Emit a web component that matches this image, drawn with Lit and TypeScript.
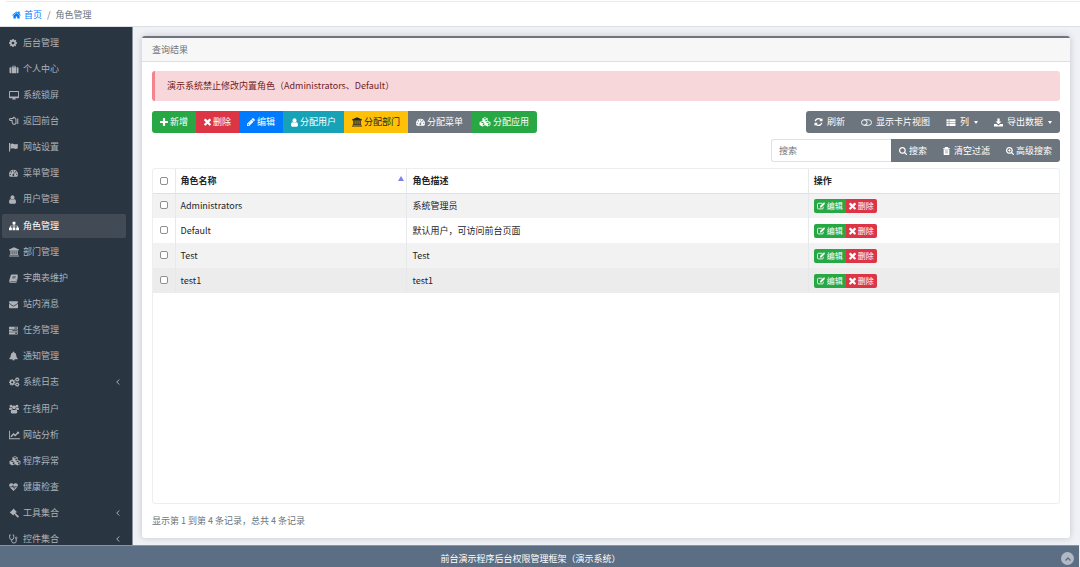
import { LitElement, html, css, svg, type TemplateResult } from "lit";
import { customElement, property } from "lit/decorators.js";
import { classMap } from "lit/directives/class-map.js";

const small = "0 0 16 16";

const gearPath =
  "M1152 896q0-106-75-181t-181-75-181 75-75 181 75 181 181 75 181-75 75-181zm512-109v222q0 12-8 23t-20 13l-185 28q-19 54-39 91 35 50 107 138 10 12 10 25t-9 23q-27 37-99 108t-94 71q-12 0-26-9l-138-108q-44 23-91 38-16 136-29 186-7 28-36 28h-222q-14 0-24.5-8.5t-11.5-21.5l-28-184q-49-16-90-37l-141 107q-10 9-25 9-14 0-25-11-126-114-165-168-7-10-7-23 0-12 8-23 15-21 51-66.5t54-70.5q-27-50-41-99l-183-27q-13-2-21-12.5t-8-23.5v-222q0-12 8-23t19-13l186-28q14-46 39-92-40-57-107-138-10-12-10-24 0-10 9-23 26-36 98.5-107.5t94.5-71.5q13 0 26 10l138 107q44-23 91-38 16-136 29-186 7-28 36-28h222q14 0 24.5 8.5t11.5 21.5l28 184q49 16 90 37l142-107q9-9 24-9 13 0 25 10 129 119 165 170 7 8 7 22 0 12-8 23-15 21-51 66.5t-54 70.5q26 50 41 98l183 28q13 2 21 12.5t8 23.5z";

// Each entry: view box, drawn width, drawn height, shape.
const icons: Record<string, [string, number, number, TemplateResult]> = {
  home: ["64 0 1664 1792", 9, 10, svg`<path d="M1472 992v480q0 26-19 45t-45 19h-384v-384h-256v384h-384q-26 0-45-19t-19-45v-480q0-1 .5-3t.5-3l575-474 575 474q1 2 1 6zm223-69l-62 74q-8 9-21 11h-3q-13 0-21-7l-692-577-692 577q-12 8-24 7-13-2-21-11l-62-74q-8-10-7-23.5t11-21.5l719-599q32-26 76-26t76 26l244 204v-195q0-14 9-23t23-9h192q14 0 23 9t9 23v408l219 182q10 8 11 21.5t-7 23.5z"/>`],
  gear: ["128 0 1536 1792", 8, 10, svg`<path d=${gearPath} />`],
  suitcase: [small, 10, 9, svg`<path fill-rule="evenodd" d="M5 4V2.6Q5 1.5 6.100 1.500H9.900Q11 1.500 11 2.600V4h1v10.500H4V4zM6.300 4h3.400V2.800H6.300zM3 4v10.500H1.600Q0 14.500 0 13V5.500Q0 4 1.600 4zM13 4h1.400Q16 4 16 5.500V13q0 1.500-1.600 1.500H13z"/>`],
  desktop: [small, 10, 10, svg`<path fill-rule="evenodd" d="M1.400 1.500h13.200Q16 1.500 16 2.900v8.700q0 1.400-1.400 1.400H10l.5 1.200q.7.300.7.800H4.800q0-.5.700-.8L6 13H1.400Q0 13 0 11.600V2.900Q0 1.500 1.400 1.500zM1.500 3v7.400h13V3z"/>`],
  hand: [small, 10, 10, svg`<path fill="none" stroke="currentColor" stroke-width="1.700" stroke-linejoin="round" d="M11 4.500 8.300 2.200Q6.300 1.600 6.700 4H2Q.6 4.300.7 5.600.9 7 2.200 7H5q-.9 1 .2 2-.6 1.200.6 2-.2 1.500 1.200 2.200h2.200l2-1.300zM14 3.800v8.800"/>`],
  flag: ["1 0 16 16", 10, 10, svg`<path d="M1 1.500h1.800V15H1zM3.400 3.200Q6 1.700 8.500 3q3 1.500 6.500-.4V10q-3 1.800-6 .5-2.700-1.300-5.600.3z"/>`],
  gauge: [small, 9, 10, svg`<path fill-rule="evenodd" d="M8 2a8 8 0 0 1 8 8q0 2.400-1.200 4.300-.2.200-.5.200H1.700q-.3 0-.5-.2Q0 12.400 0 10a8 8 0 0 1 8-8zM2.300 9.200a1.100 1.100 0 1 0 .1 0zM4 5a1.100 1.100 0 1 0 .1 0zM8 3.400a1.100 1.100 0 1 0 .1 0zM12 5a1.100 1.100 0 1 0 .1 0zM13.700 9.200a1.100 1.100 0 1 0 .1 0zM9 6.200 7.700 10a1.700 1.700 0 1 0 1.200.4L10 6.600z"/>`],
  user: ["256 64 1280 1664", 7, 9, svg`<path d="M1536 1399q0 109-62.500 187t-150.500 78h-854q-88 0-150.500-78t-62.500-187q0-85 8.500-160.500t31.500-152 58.500-131 94-89 134.500-34.500q131 128 313 128t313-128q76 0 134.500 34.500t94 89 58.500 131 31.500 152 8.500 160.500zm-256-887q0 159-112.500 271.500t-271.500 112.500-271.500-112.500-112.500-271.500 112.500-271.500 271.500-112.500 271.500 112.500 112.500 271.500z"/>`],
  sitemap: ["0 0 1792 1792", 10, 10, svg`<path d="M1792 1248v320q0 40-28 68t-68 28h-320q-40 0-68-28t-28-68v-320q0-40 28-68t68-28h96v-192h-512v192h96q40 0 68 28t28 68v320q0 40-28 68t-68 28h-320q-40 0-68-28t-28-68v-320q0-40 28-68t68-28h96v-192h-512v192h96q40 0 68 28t28 68v320q0 40-28 68t-68 28h-320q-40 0-68-28t-28-68v-320q0-40 28-68t68-28h96v-192q0-52 38-90t90-38h512v-192h-96q-40 0-68-28t-28-68v-320q0-40 28-68t68-28h320q40 0 68 28t28 68v320q0 40-28 68t-68 28h-96v192h512q52 0 90 38t38 90v192h96q40 0 68 28t28 68z"/>`],
  bank: [small, 10, 10, svg`<path d="M8 .5 16 4v1.200h-1.100q0 .6-.6.600H1.700q-.6 0-.6-.6H0V4zM2.100 6.500h2.200V12h1.200V6.500h2V12h1.200V6.500h2V12h1.200V6.500H14V12h.4q.6 0 .6.800H1q0-.8.600-.8h.5zM.6 13.400h14.800q.6 0 .6.700v1.200H0v-1.200q0-.7.600-.7z"/>`],
  book: [small, 9, 9, svg`<path fill-rule="evenodd" d="M5.300 1h9q1.900.3 1.400 2l-2.700 9.300Q12.600 13.500 11.400 13.500H3.200q-1 0-1 .4.100.5 1 .5h8.900q.6 0 .8-.6L15.600 5q.6.500.3 1.500l-2.500 8.200q-.4 1-1.500 1H3Q.7 15.600.3 13.300q-.2-1 .2-1.800L3 2.800Q3.600 1 5.300 1zM6.400 4l-.3 1h6l.3-1zM5.700 6.400l-.3 1h6l.3-1z"/>`],
  envelope: ["0 0 1792 1792", 9, 9, svg`<path d="M1792 710v794q0 66-47 113t-113 47h-1472q-66 0-113-47t-47-113v-794q44 49 101 87 362 246 497 345 57 42 92.500 65.500t94.500 48 110 24.500h2q51 0 110-24.500t94.500-48 92.500-65.500q170-123 498-345 57-39 100-87zm0-294q0 79-49 151t-122 123q-376 261-468 325-10 7-42.500 30.500t-54 38-52 32.500-57.500 27-50 9h-2q-23 0-50-9t-57.500-27-52-32.500-54-38-42.500-30.500q-91-64-262-182.500t-205-142.500q-62-42-117-115.500t-55-136.500q0-78 41.500-130t118.500-52h1472q65 0 112.500 47t47.500 113z"/>`],
  tasks: [small, 9, 9, svg`<path fill-rule="evenodd" d="M.6 1.500h14.800q.6 0 .6.600v2.800q0 .6-.6.600H.6Q0 5.500 0 4.900V2.100q0-.6.600-.6zM9.500 2.700v1.600h5.300V2.700zM.6 6.300h14.800q.6 0 .6.600v2.700q0 .6-.6.600H.6q-.6 0-.6-.6V6.900q0-.6.600-.6zM6 7.400V9h8.800V7.400zM.6 11h14.800q.6 0 .6.600v2.800q0 .6-.6.600H.6q-.6 0-.6-.6v-2.800q0-.6.600-.6zM11 12.200v1.600h3.800v-1.600z"/>`],
  bell: [small, 9, 10, svg`<path d="M8 .2q1 0 1 1v.5q3.500.7 3.800 4.300 0 5 2.700 6.500 0 1-1 1.100H10Q9.800 15.700 8 15.800 6.200 15.700 6 13.600H1.500q-1-.1-1-1.100Q3.200 11 3.200 6 3.500 2.400 7 1.700v-.5q0-1 1-1z"/>`],
  gears: [small, 10, 10, svg`<g transform="translate(-.8 2.600) scale(.0066)"><path d=${gearPath} /></g><g transform="translate(9 -.2) scale(.0046)"><path d=${gearPath} /></g><g transform="translate(9 8) scale(.0046)"><path d=${gearPath} /></g>`],
  users: [small, 10, 10, svg`<path d="M3.200 1a2.200 2.200 0 1 1-.1 0zM12.800 1a2.200 2.200 0 1 1-.1 0zM8 2.200a3 3 0 1 1-.1 0zM1.600 5.500q1.800 1 2.900.2Q4.500 7.300 5.500 8.200 3.800 8.300 3 9.500H1.600Q0 9.500 0 8q0-2.300 1.600-2.500zM14.400 5.500Q16 5.700 16 8q0 1.500-1.600 1.500H13q-.8-1.200-2.500-1.300 1-.9 1-2.500 1.100.8 2.900-.2zM5.200 8.700q2.800 2 5.600 0 2.500.2 2.500 4Q13.300 15 11.300 15H4.700q-2 0-2-2.300 0-3.800 2.500-4z"/>`],
  chart: ["0 0 18 16", 11, 10, svg`<path d="M0 1h1.500v12.500H18V15H0zM16.500 2.500v4.300l-1.400-1.300-5 5.100-2.600-2.400-3.400 3.500L2.200 9.900 7.500 4.700l2.500 2.500 3.400-3.400-1.300-1.300z"/>`],
  cubes: ["0 0 18 16", 12, 10, svg`<path fill-rule="evenodd" d="m9 .3 4.200 1.700v4.300l4.500 1.800v4.700L13.300 15.200 9 13.100 4.700 15.200.3 12.800V8.100l4.500-1.800V2zM6.200 2.700 9 3.800l2.800-1.100L9 1.700zM9.700 5v2.300l2.500-1V4zM2 8.500l2.800 1.200 2.800-1.200-2.800-1.100zM10.400 8.500l2.800 1.200 2.800-1.200-2.800-1.100zM5.500 10.800v2.700L8 12.200V9.700zM13.900 10.800v2.700l2.500-1.300V9.700z"/>`],
  heart: [small, 9, 10, svg`<path d="M.4 7.200Q-.5 1.500 4.300 1.500 6.700 1.600 8 3.500q1.300-1.900 3.700-2 4.800 0 3.900 5.700h-4l-.9-1.800-1.300 3.800L7 4 5.300 7.200zM1.200 8.500h4.900l.7-1.300 2.400 5 1.700-4 .1.300h3.800L8 15z"/>`],
  gavel: [small, 10, 10, svg`<path d="m6.600.8.8.3 4.800 4.800q.4.700-.2 1.300l-1-.2-1 1 5.400 4.700q.6.700 0 1.500l-.9.800q-.8.500-1.400-.1L8.400 9.700l-1 .9.200 1q-.6.600-1.200.2L1.500 7q-.4-.6.200-1.200l1 .1L6.500 2Z"/>`],
  stethoscope: ["1 0 16 16", 10, 10, svg`<path fill="none" stroke="currentColor" stroke-width="1.500" d="M3.800 1.500H2v4.300q.2 3 3.300 3.200 3.100-.2 3.300-3.200V1.500H6.900M5.300 9v2.500q.2 3 3.500 3 3.600 0 3.700-3V8"/><circle cx="12.500" cy="6.300" r="1.400" fill="none" stroke="currentColor" stroke-width="1.300"/>`],
  plus: ["192 128 1408 1408", 8, 8, svg`<path d="M1600 736v192q0 40-28 68t-68 28h-416v416q0 40-28 68t-68 28h-192q-40 0-68-28t-28-68v-416h-416q-40 0-68-28t-28-68v-192q0-40 28-68t68-28h416v-416q0-40 28-68t68-28h192q40 0 68 28t28 68v416h416q40 0 68 28t28 68z"/>`],
  times: ["302 270 1188 1320", 7, 8, svg`<path d="M1490 1322q0 40-28 68l-136 136q-28 28-68 28t-68-28l-294-294-294 294q-28 28-68 28t-68-28l-136-136q-28-28-28-68t28-68l294-294-294-294q-28-28-28-68t28-68l136-136q28-28 68-28t68 28l294 294 294-294q28-28 68-28t68 28l136 136q28 28 28 68t-28 68l-294 294 294 294q28 28 28 68z"/>`],
  pencil: ["128 128 1536 1536", 8, 8, svg`<path d="M491 1536l91-91-235-235-91 91v107h128v128h107zm523-928q0-22-22-22-10 0-17 7l-542 542q-7 7-7 17 0 22 22 22 10 0 17-7l542-542q7-7 7-17zm-54-192l416 416-832 832h-416v-416zm683 96q0 53-37 90l-166 166-416-416 166-165q36-38 90-38 53 0 91 38l235 234q37 39 37 91z"/>`],
  edit: [small, 8, 8, svg`<path fill="none" stroke="currentColor" stroke-width="1.700" d="M10.500 2.500H3Q1 2.500 1 4.500v7.300q0 2 2 2h7.500q2 0 2-2V9.500"/><path d="m12.600 1.600 2.700 2.700-6.600 6.600H6V8.200zM13.300.9q.7-.6 1.400 0l1.200 1.300q.5.700 0 1.300l-.3.300L13 1.200z"/>`],
  refresh: ["128 128 1536 1536", 9, 8, svg`<path d="M1639 1056q0 5-1 7-64 268-268 434.500t-478 166.500q-146 0-282.500-55t-243.500-157l-129 129q-19 19-45 19t-45-19-19-45v-448q0-26 19-45t45-19h448q26 0 45 19t19 45-19 45l-137 137q71 66 161 102t187 36q134 0 250-65t186-179q11-17 53-117 8-23 30-23h192q13 0 22.500 9.500t9.500 22.500zm25-800v448q0 26-19 45t-45 19h-448q-26 0-45-19t-19-45 19-45l138-138q-148-137-349-137-134 0-250 65t-186 179q-11 17-53 117-8 23-30 23h-199q-13 0-22.500-9.500t-9.500-22.500v-7q65-268 270-434.500t480-166.500q146 0 284 55.500t245 156.500l130-129q19-19 45-19t45 19 19 45z"/>`],
  toggle: ["0 0 20 16", 11, 9, svg`<path fill="none" stroke="currentColor" stroke-width="1.700" d="M6 3h8a5 5 0 0 1 0 10H6"/><circle cx="6" cy="8" r="5" fill="none" stroke="currentColor" stroke-width="1.700"/>`],
  list: [small, 10, 9, svg`<path d="M0 2h4v3.400H0zM5 2h11v3.400H5zM0 6.400h4v3.400H0zM5 6.400h11v3.400H5zM0 10.800h4v3.400H0zM5 10.800h11v3.400H5z"/>`],
  download: [small, 9, 9, svg`<path d="M6 1h4v5h3.300L8 11 2.700 6H6zM0 10.500h4.700L8 13.300l3.300-2.800H16V15H0z"/>`],
  search: ["64 128 1664 1664", 8, 8, svg`<path d="M1216 832q0-185-131.500-316.500t-316.500-131.500-316.500 131.500-131.500 316.500 131.500 316.500 316.500 131.500 316.500-131.500 131.500-316.500zm512 832q0 52-38 90t-90 38q-54 0-90-38l-343-342q-179 124-399 124-143 0-273.500-55.500t-225-150-150-225-55.500-273.500 55.500-273.500 150-225 225-150 273.500-55.500 273.500 55.500 225 150 150 225 55.500 273.500q0 220-124 399l343 343q37 37 37 90z"/>`],
  zoomIn: ["64 128 1664 1664", 8, 8, svg`<path d="M1216 832q0-185-131.500-316.500t-316.500-131.500-316.500 131.500-131.500 316.500 131.500 316.500 316.500 131.500 316.500-131.500 131.500-316.500zm512 832q0 52-38 90t-90 38q-54 0-90-38l-343-342q-179 124-399 124-143 0-273.500-55.500t-225-150-150-225-55.500-273.500 55.500-273.500 150-225 225-150 273.500-55.500 273.500 55.500 225 150 150 225 55.500 273.500q0 220-124 399l343 343q37 37 37 90zM690 530h156v224h224v156H846v224H690V910H466V754h224z"/>`],
  trash: ["2 1 12 14", 7, 8, svg`<path fill-rule="evenodd" d="M6 1h4q.8 0 1 .8l.4 1.200H14v1.400H2V3h2.600L5 1.800Q5.200 1 6 1zM3 5h10v8.500q-.2 1.500-1.500 1.500h-7Q3.200 15 3 13.500zM5.500 6.700v5.600h.6V6.700zM7.700 6.700v5.600h.6V6.700zM9.900 6.700v5.600h.6V6.700z"/>`],
  angleLeft: ["4 2 8 12", 4, 6, svg`<path fill="none" stroke="currentColor" stroke-width="2" d="M10.500 3 5.500 8l5 5"/>`],
  angleUp: [small, 8, 8, svg`<path fill="none" stroke="currentColor" stroke-width="2.600" d="m3 11 5-5 5 5"/>`],
};

@customElement("fa-icon")
class FaIcon extends LitElement {
  @property() name = "home";
  static styles = css`
    :host { display: inline-flex; flex: none; }
    svg { fill: currentColor; overflow: visible; }
  `;
  render() {
    const [box, w, h, shape] = icons[this.name];
    return html`<svg viewBox=${box} width=${w} height=${h} aria-hidden="true">${shape}</svg>`;
  }
}

interface MenuItem { icon: string; text: string; active?: boolean; children?: boolean; }

const menu: MenuItem[][] = [
  [
    { icon: "gear", text: "后台管理" },
    { icon: "suitcase", text: "个人中心" },
    { icon: "desktop", text: "系统锁屏" },
    { icon: "hand", text: "返回前台" },
    { icon: "flag", text: "网站设置" },
    { icon: "gauge", text: "菜单管理" },
    { icon: "user", text: "用户管理" },
  ],
  [
    { icon: "sitemap", text: "角色管理", active: true },
    { icon: "bank", text: "部门管理" },
    { icon: "book", text: "字典表维护" },
    { icon: "envelope", text: "站内消息" },
    { icon: "tasks", text: "任务管理" },
    { icon: "bell", text: "通知管理" },
    { icon: "gears", text: "系统日志", children: true },
  ],
  [
    { icon: "users", text: "在线用户" },
    { icon: "chart", text: "网站分析" },
    { icon: "cubes", text: "程序异常" },
    { icon: "heart", text: "健康检查" },
    { icon: "gavel", text: "工具集合", children: true },
    { icon: "stethoscope", text: "控件集合", children: true },
  ],
];

const actions = [
  { icon: "plus", text: "新增", tone: "success" },
  { icon: "times", text: "删除", tone: "danger" },
  { icon: "pencil", text: "编辑", tone: "primary" },
  { icon: "user", text: "分配用户", tone: "info" },
  { icon: "bank", text: "分配部门", tone: "warning" },
  { icon: "gauge", text: "分配菜单", tone: "secondary" },
  { icon: "cubes", text: "分配应用", tone: "success" },
];

const roles = [
  { name: "Administrators", desc: "系统管理员" },
  { name: "Default", desc: "默认用户，可访问前台页面" },
  { name: "Test", desc: "Test" },
  { name: "test1", desc: "test1", hover: true },
];

@customElement("app-root")
class AppRoot extends LitElement {
  static styles = css`
    :host {
      display: flex;
      flex-direction: column;
      height: 100vh;
      overflow: hidden;
      font: 9px/14px "Noto Sans CJK SC", "Noto Sans", sans-serif;
      color: #212529;
      background: #eff1f7;
    }
    * { box-sizing: border-box; }
    a { color: inherit; text-decoration: none; }
    button, input { font: inherit; color: inherit; margin: 0; }
    .crumbs {
      flex: none;
      height: 27px;
      padding-left: 6px;
      background: #fff;
      border-bottom: 1px solid #dcdfe3;
    }
    .crumbs ol {
      display: flex;
      align-items: center;
      height: 26px;
      margin: 0;
      padding: 2px 6px 0;
      list-style: none;
      border-top: 1px solid #fff;
      box-shadow: inset 0 1px #e9ecef;
      color: #6c757d;
    }
    .crumbs a { display: flex; align-items: center; gap: 3px; color: #007bff; }
    .slash { padding: 0 5px; }
    .body { flex: 1; min-height: 0; display: flex; }
    .side {
      flex: none;
      width: 133px;
      padding: 4px 6px 0 2px;
      overflow: hidden;
      background: #2a3542;
      border-right: 1px solid #8d949c;
      color: #aeb2b7;
    }
    .groups { display: flex; flex-direction: column; gap: 3px; }
    .groups ul { display: grid; gap: 2px; margin: 0; padding: 0; list-style: none; }
    .link {
      display: flex;
      align-items: center;
      gap: 4px;
      height: 24px;
      padding: 0 6px 0 7px;
      border-radius: 2px;
    }
    .link.active { background: #414a55; color: #fff; }
    .slot { display: flex; flex: none; width: 10px; }
    .arrow { margin-left: auto; }
    main { flex: 1; min-width: 0; display: flex; padding: 9px 10px 7px 9px; }
    .card {
      flex: 1;
      min-width: 0;
      display: flex;
      flex-direction: column;
      background: #fff;
      border-top: 2px solid #6c757d;
      border-radius: 3px;
      box-shadow: 0 0 7px rgba(0, 0, 0, 0.18);
    }
    .card h1 {
      margin: 0;
      padding: 5px 10px 4px;
      font-size: 9px;
      font-weight: 400;
      color: #6c757d;
      background: #f7f7f7;
      border-bottom: 1px solid #dfdfdf;
    }
    .content {
      flex: 1;
      min-height: 0;
      display: flex;
      flex-direction: column;
      padding: 9px 10px 10px;
    }
    .alert {
      padding: 8px 12px;
      color: #721c24;
      background: #f8d7da;
      border-left: 3px solid #f5828f;
      border-radius: 3px;
    }
    .tools { display: flex; justify-content: space-between; margin-top: 10px; }
    .btns { display: flex; border-radius: 3px; overflow: hidden; }
    .btn {
      display: flex;
      align-items: center;
      gap: 2px;
      height: 22px;
      padding: 0 8px;
      border: 0;
      color: #fff;
      white-space: nowrap;
      background: #6c757d;
    }
    .btn.wide { gap: 4px; }
    .success { background: #28a745; }
    .danger { background: #dc3545; }
    .primary { background: #007bff; }
    .info { background: #17a2b8; }
    .warning { background: #ffc107; color: #212529; }
    .secondary { background: #6c757d; }
    .caret {
      margin-left: 1px;
      border: 2px solid transparent;
      border-top: 3px solid currentColor;
      border-bottom: 0;
    }
    .search { display: flex; justify-content: flex-end; margin-top: 6px; }
    .search input {
      width: 120px;
      height: 23px;
      padding: 0 7px;
      border: 1px solid #dee2e6;
      border-right: 0;
      border-radius: 3px 0 0 3px;
      outline: 0;
    }
    .search input::placeholder { color: #6c757d; opacity: 1; }
    .search .btns { border-radius: 0 3px 3px 0; }
    .search .btn { height: 23px; }
    .grid {
      flex: 1;
      min-height: 0;
      margin-top: 6px;
      border: 1px solid #eceef0;
      border-radius: 3px;
      overflow: hidden;
    }
    table { width: 100%; table-layout: fixed; border-collapse: collapse; }
    .col-check { width: 22px; }
    .col-name { width: 25.6%; }
    .col-desc { width: 44.3%; }
    th, td { height: 25px; padding: 0 5px; text-align: left; border-left: 1px solid #e6e9ec; }
    th:first-child, td:first-child { border-left: 0; }
    th { height: 24px; font-weight: 700; border-bottom: 1px solid #dee2e6; }
    .check { padding: 0; text-align: center; }
    .check input {
      appearance: none;
      display: block;
      width: 8px;
      height: 8px;
      margin: 0 auto;
      border: 1px solid #8f8f8f;
      border-radius: 2px;
      background: #fff;
    }
    td.check input { margin-bottom: 2px; }
    tbody tr:nth-child(odd) { background: #f2f2f2; }
    tbody tr.hover { background: #ececec; }
    .sort { display: flex; justify-content: space-between; align-items: center; }
    .up { border: 3px solid transparent; border-bottom: 5px solid #8080e0; border-top: 0; margin: 0 -3px 5px 0; }
    .row-btns { display: inline-flex; vertical-align: middle; border-radius: 2px; overflow: hidden; }
    .row-btns .btn { height: 14px; padding: 0 3px; gap: 2px; font-size: 8px; line-height: 14px; }
    .info-line { margin: 10px 0 0; color: #6c757d; }
    footer {
      flex: none;
      display: flex;
      align-items: center;
      justify-content: center;
      height: 22px;
      padding: 4px 18px 0 0;
      margin-right: 1px;
      position: relative;
      color: #fff;
      background: #5b6e84;
      border-top: 1px solid #8793a6;
    }
    .top {
      position: absolute;
      right: 5px;
      bottom: 2px;
      display: flex;
      align-items: center;
      justify-content: center;
      width: 13px;
      height: 13px;
      padding: 0;
      border: 0;
      border-radius: 50%;
      color: #5b6e84;
      background: #b0b9c4;
    }
  `;

  private action(icon: string, text: string, cls: string, caret = false) {
    return html`<button type="button" class="btn ${cls}">
      <fa-icon name=${icon}></fa-icon><span>${text}</span>${caret ? html`<i class="caret"></i>` : ""}
    </button>`;
  }

  render() {
    return html`
      <nav class="crumbs" aria-label="导航">
        <ol>
          <li><a href="#"><fa-icon name="home"></fa-icon>首页</a></li>
          <li class="slash">/</li>
          <li>角色管理</li>
        </ol>
      </nav>
      <div class="body">
        <nav class="side" aria-label="菜单">
          <div class="groups">
            ${menu.map((group) => html`<ul>
              ${group.map((m) => html`<li>
                <a href="#" class=${classMap({ link: true, active: !!m.active })}>
                  <span class="slot"><fa-icon name=${m.icon}></fa-icon></span><span>${m.text}</span>
                  ${m.children ? html`<fa-icon class="arrow" name="angleLeft"></fa-icon>` : ""}
                </a>
              </li>`)}
            </ul>`)}
          </div>
        </nav>
        <main>
          <section class="card">
            <h1>查询结果</h1>
            <div class="content">
              <div class="alert" role="alert">演示系统禁止修改内置角色（Administrators、Default）</div>
              <div class="tools">
                <div class="btns">${actions.map((a) => this.action(a.icon, a.text, a.tone))}</div>
                <div class="btns">
                  ${this.action("refresh", "刷新", "wide")}
                  ${this.action("toggle", "显示卡片视图", "wide")}
                  ${this.action("list", "列", "wide", true)}
                  ${this.action("download", "导出数据", "wide", true)}
                </div>
              </div>
              <div class="search">
                <input type="text" placeholder="搜索" aria-label="搜索" />
                <div class="btns">
                  ${this.action("search", "搜索", "")}
                  ${this.action("trash", "清空过滤", "wide")}
                  ${this.action("zoomIn", "高级搜索", "")}
                </div>
              </div>
              <div class="grid">
                <table>
                  <colgroup><col class="col-check" /><col class="col-name" /><col class="col-desc" /><col /></colgroup>
                  <thead>
                    <tr>
                      <th class="check"><input type="checkbox" aria-label="全选" /></th>
                      <th><div class="sort">角色名称<i class="up"></i></div></th>
                      <th>角色描述</th>
                      <th>操作</th>
                    </tr>
                  </thead>
                  <tbody>
                    ${roles.map((r) => html`<tr class=${classMap({ hover: !!r.hover })}>
                      <td class="check"><input type="checkbox" aria-label=${r.name} /></td>
                      <td>${r.name}</td>
                      <td>${r.desc}</td>
                      <td><div class="row-btns">
                        ${this.action("edit", "编辑", "success")}
                        ${this.action("times", "删除", "danger")}
                      </div></td>
                    </tr>`)}
                  </tbody>
                </table>
              </div>
              <p class="info-line">显示第 1 到第 4 条记录，总共 4 条记录</p>
            </div>
          </section>
        </main>
      </div>
      <footer>
        <span>前台演示程序后台权限管理框架（演示系统）</span>
        <button type="button" class="top" aria-label="返回顶部"><fa-icon name="angleUp"></fa-icon></button>
      </footer>
    `;
  }
}
